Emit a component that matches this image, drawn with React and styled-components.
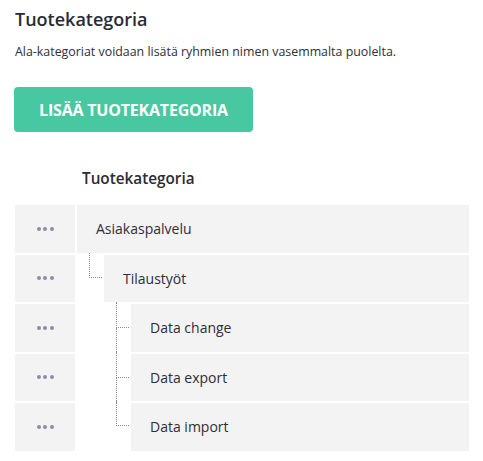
import styled, { createGlobalStyle } from "styled-components";

const GlobalStyle = createGlobalStyle`
  body {
    margin: 0;
    background: #ffffff;
    font-family: "Open Sans", "Liberation Sans", sans-serif;
    color: #2e2e38;
  }
`;

const categories = [
  { id: 1, name: "Asiakaspalvelu", level: 0 },
  { id: 2, name: "Tilaustyöt", level: 1, last: true },
  { id: 3, name: "Data change", level: 2 },
  { id: 4, name: "Data export", level: 2 },
  { id: 5, name: "Data import", level: 2, last: true },
];

const Page = styled.div`
  padding: 6px 14px 0 15px;
  width: 454px;
`;

const Title = styled.h2`
  margin: 0;
  font-size: 18px;
  font-weight: 600;
  line-height: 26px;
  color: #2b2b33;
`;

const Hint = styled.p`
  margin: 12px 0 0;
  font-size: 12.4px;
  line-height: 16px;
  color: #2e2e38;
`;

const AddButton = styled.button`
  margin: 27px 0 0 -1px;
  width: 239px;
  height: 45px;
  border: none;
  border-radius: 4px;
  background: #48c8a0;
  color: #ffffff;
  font-family: inherit;
  font-size: 16px;
  font-weight: 700;
  letter-spacing: -0.2px;
  cursor: pointer;
`;

const ColumnHeader = styled.div`
  margin: 36px 0 0 67px;
  font-size: 15.3px;
  font-weight: 600;
  line-height: 20px;
  color: #2b2b33;
`;

const Tree = styled.div`
  margin-top: 17px;
  display: flex;
  flex-direction: column;
  gap: 2px;
`;

const Row = styled.div`
  display: flex;
  height: 47.5px;
  gap: 2px;
`;

const MenuCell = styled.div`
  width: 60px;
  flex-shrink: 0;
  background: #f3f3f3;
  display: flex;
  align-items: center;
  justify-content: center;
  gap: 2.5px;
`;

const Dot = styled.span`
  width: 4px;
  height: 4px;
  border-radius: 50%;
  background: #8a8ea6;
`;

const Indent = styled.div`
  width: ${(p) => p.$level * 27 - 2}px;
  flex-shrink: 0;
  display: flex;
  justify-content: flex-end;
`;

const Connector = styled.div`
  width: 13px;
  display: flex;
  flex-direction: column;
  margin: -2px 0 ${(p) => (p.$last ? "0" : "-2px")};
`;

const Elbow = styled.div`
  flex: 1;
  border-left: 1px dotted #8c8c8c;
  border-bottom: 1px dotted #8c8c8c;
`;

const Tail = styled.div`
  flex: 1;
  border-left: ${(p) => (p.$show ? "1px dotted #8c8c8c" : "none")};
`;

const Label = styled.div`
  flex: 1;
  background: #f3f3f3;
  display: flex;
  align-items: center;
  padding-left: 19px;
  font-size: 14px;
  color: #2e2e38;
`;

function TreeRow({ item }) {
  return (
    <Row>
      <MenuCell>
        <Dot />
        <Dot />
        <Dot />
      </MenuCell>
      {item.level > 0 && (
        <Indent $level={item.level}>
          <Connector $last={item.last}>
            <Elbow />
            <Tail $show={!item.last} />
          </Connector>
        </Indent>
      )}
      <Label>{item.name}</Label>
    </Row>
  );
}

export default function App() {
  return (
    <>
      <GlobalStyle />
      <Page>
        <Title>Tuotekategoria</Title>
        <Hint>Ala-kategoriat voidaan lisätä ryhmien nimen vasemmalta puolelta.</Hint>
        <AddButton>LISÄÄ TUOTEKATEGORIA</AddButton>
        <ColumnHeader>Tuotekategoria</ColumnHeader>
        <Tree>
          {categories.map((c) => (
            <TreeRow key={c.id} item={c} />
          ))}
        </Tree>
      </Page>
    </>
  );
}
